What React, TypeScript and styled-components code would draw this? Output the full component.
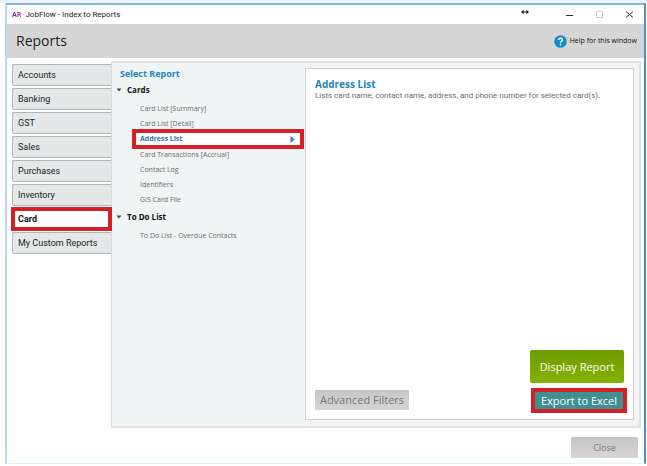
import React, { useState } from "react";
import styled, { createGlobalStyle, css } from "styled-components";

const GlobalStyle = createGlobalStyle`
  * { box-sizing: border-box; }
  body { margin: 0; background: #fff; font-family: "Open Sans", "Noto Sans", sans-serif; color: #333; }
  button { font-family: inherit; margin: 0; padding: 0; cursor: pointer; }
`;

const compactFont = `Roboto, "Noto Sans", sans-serif`;

const Desktop = styled.div`
  min-height: 100vh;
  display: flex;
  padding: 3px 1px 2px 5px;
  background: linear-gradient(#edf3fc 3px, #fff 3px);
`;

const Window = styled.div`
  flex: 1;
  display: flex;
  flex-direction: column;
  border-style: solid;
  border-width: 2px 2px 1px 2px;
  border-color: #7dbbd6 #4692c0 #dff3fa #b9d8e6;
  background: #fff;
`;

const TitleBar = styled.header`
  height: 19px;
  display: flex;
  align-items: center;
  padding: 0 10px 0 5px;
  gap: 4px;
`;

const WindowTitle = styled.span`
  flex: 1;
  font-family: ${compactFont};
  font-size: 8px;
  line-height: 10px;
  color: #222;
`;

const Logo = styled.span`
  font-size: 7px;
  line-height: 10px;
  font-weight: 700;
  background: linear-gradient(90deg, #4a35c8, #d92bb1);
  background-clip: text;
  color: transparent;
`;

const ResizeMark = styled.svg`
  width: 8px;
  height: 6px;
  margin: 0 32px 6px 0;
`;

const WindowControls = styled.div`
  display: flex;
  gap: 21px;
`;

const ControlButton = styled.button<{ $dim?: boolean }>`
  width: 9px;
  height: 9px;
  border: 0;
  background: none;
  color: ${(p) => (p.$dim ? "#cfcfcf" : "#333")};
  svg { display: block; width: 9px; height: 9px; }
`;

const PageHeader = styled.div`
  height: 34px;
  display: flex;
  align-items: center;
  justify-content: space-between;
  padding: 0 7px 0 9px;
  background: #d6d6d6;
`;

const PageTitle = styled.h1`
  margin: 0;
  font-size: 14px;
  line-height: 18px;
  font-weight: 400;
  color: #1d1d1d;
`;

const HelpLink = styled.a`
  display: flex;
  align-items: center;
  gap: 3px;
  font-size: 7px;
  line-height: 10px;
  color: #111;
  text-decoration: none;
`;

const HelpIcon = styled.svg`
  width: 13px;
  height: 13px;
`;

const Main = styled.main`
  flex: 1;
  display: flex;
  padding: 3px 3px 0 5px;
`;

const TabList = styled.nav`
  width: 99px;
  display: flex;
  flex-direction: column;
  gap: 2px;
  padding-top: 3px;
`;

const marked = css`
  outline: 4px solid #d42027;
  border-radius: 0;
`;

const Tab = styled.button<{ $active: boolean }>`
  height: 22px;
  padding-left: 5px;
  border: 1px solid #b4b6b6;
  border-right: 0;
  border-radius: 2px 0 0 2px;
  background: #e5e8e8;
  font-family: ${compactFont};
  font-size: 9px;
  line-height: 12px;
  text-align: left;
  color: #222;
  ${(p) =>
    p.$active &&
    css`
      ${marked}
      outline-offset: -3px;
      position: relative;
      border-color: #fff;
      background: #fff;
      font-weight: 700;
      color: #111;
    `}
`;

const Panel = styled.section`
  flex: 1;
  display: flex;
  padding: 5px 5px 6px 0;
  border: 2px solid #e1e1e1;
  border-left: 1px solid #d8d8d8;
  background: #f3f4f4;
`;

const ReportTree = styled.div`
  width: 193px;
  margin: -5px 0 -6px;
  padding: 5px 5px 0 8px;
  background: #eff4f4;
`;

const SectionTitle = styled.h2<{ $large?: boolean }>`
  margin: 0;
  font-size: ${(p) => (p.$large ? 10 : 9)}px;
  line-height: ${(p) => (p.$large ? 14 : 12)}px;
  font-weight: 700;
  color: #2484bb;
`;

const GroupToggle = styled.button`
  display: flex;
  align-items: center;
  gap: 5px;
  height: 12px;
  margin: 4px 0 4px -4px;
  border: 0;
  background: none;
  font-size: 8px;
  line-height: 12px;
  font-weight: 700;
  color: #111;
  svg { width: 6px; height: 4px; }
`;

const ReportList = styled.div`
  display: flex;
  flex-direction: column;
  padding: 1px 0 0 16px;
`;

const ReportItem = styled.button<{ $active: boolean }>`
  height: 15px;
  display: flex;
  align-items: center;
  justify-content: space-between;
  padding: 0 5px 0 4px;
  border: 0;
  background: none;
  font-size: 7px;
  line-height: 10px;
  text-align: left;
  color: #6c6c6c;
  svg { width: 5px; height: 7px; }
  ${(p) =>
    p.$active &&
    css`
      ${marked}
      height: 12px;
      margin: 2px 0;
      position: relative;
      background: #fff;
      font-weight: 700;
      color: #2f78b0;
    `}
`;

const Details = styled.article`
  flex: 1;
  display: flex;
  flex-direction: column;
  border: 1px solid #cfcfcf;
  background: #fff;
  padding: 8px 9px 9px;
`;

const Description = styled.p`
  margin: 0;
  font-family: ${compactFont};
  font-size: 8px;
  line-height: 10px;
  color: #6c6c6c;
`;

const Actions = styled.div`
  margin-top: auto;
  display: flex;
  justify-content: space-between;
  align-items: flex-end;
`;

const PrimaryActions = styled.div`
  width: 94px;
  display: flex;
  flex-direction: column;
  gap: 9px;
`;

const ActionButton = styled.button<{ $kind: "grey" | "green" | "teal" }>`
  height: 20px;
  border: 0;
  border-radius: 1px;
  font-size: 11px;
  line-height: 14px;
  color: #777;
  background: linear-gradient(#c6c6c6, #d6d6d6);
  ${(p) =>
    p.$kind === "green" &&
    css`
      height: 33px;
      border-radius: 2px;
      background: linear-gradient(#6f9c00, #83b100);
      color: #fff;
    `}
  ${(p) =>
    p.$kind === "teal" &&
    css`
      ${marked}
      height: 17px;
      margin: 0 1px 1px 5px;
      background: #3f8f93;
      color: #fff;
    `}
`;

const FilterButton = styled(ActionButton)`
  width: 94px;
`;

const Footer = styled.footer`
  display: flex;
  justify-content: flex-end;
  padding: 9px 6px 5px;
`;

const CloseButton = styled(ActionButton)`
  width: 67px;
  height: 21px;
  font-size: 9px;
`;

const tabs = ["Accounts", "Banking", "GST", "Sales", "Purchases", "Inventory", "Card", "My Custom Reports"];

const groups = [
  {
    name: "Cards",
    reports: [
      "Card List [Summary]",
      "Card List [Detail]",
      "Address List",
      "Card Transactions [Accrual]",
      "Contact Log",
      "Identifiers",
      "GIS Card File",
    ],
  },
  { name: "To Do List", reports: ["To Do List - Overdue Contacts"] },
];

export default function App() {
  const [tab, setTab] = useState("Card");
  const [report, setReport] = useState("Address List");

  return (
    <>
      <GlobalStyle />
      <Desktop>
        <Window>
          <TitleBar>
            <Logo>AR</Logo>
            <WindowTitle>JobFlow - Index to Reports</WindowTitle>
            <ResizeMark viewBox="0 0 9 6" aria-hidden="true">
              <path d="M0 3 3 0.5V2.3H6V0.5L9 3 6 5.5V3.7H3V5.5Z" fill="#222" />
            </ResizeMark>
            <WindowControls>
              <ControlButton aria-label="Minimize">
                <svg viewBox="0 0 9 9"><path d="M1 5.5H8" stroke="currentColor" /></svg>
              </ControlButton>
              <ControlButton aria-label="Maximize" $dim>
                <svg viewBox="0 0 9 9"><path d="M1.5 1.5H7.5V7.5H1.5Z" fill="none" stroke="currentColor" /></svg>
              </ControlButton>
              <ControlButton aria-label="Close window">
                <svg viewBox="0 0 9 9"><path d="M1 1.5 8 7.5M8 1.5 1 7.5" stroke="currentColor" /></svg>
              </ControlButton>
            </WindowControls>
          </TitleBar>
          <PageHeader>
            <PageTitle>Reports</PageTitle>
            <HelpLink href="#help">
              <HelpIcon viewBox="0 0 13 13" aria-hidden="true">
                <circle cx="6.5" cy="6.5" r="6.3" fill="#178bc9" />
                <path d="M4.6 5.1C4.6 2.6 8.5 2.7 8.4 5 8.3 6.3 6.6 6.3 6.5 7.8" fill="none" stroke="#fff" strokeWidth="1.4" />
                <circle cx="6.5" cy="9.6" r="0.8" fill="#fff" />
              </HelpIcon>
              Help for this window
            </HelpLink>
          </PageHeader>
          <Main>
            <TabList>
              {tabs.map((name) => (
                <Tab key={name} $active={name === tab} onClick={() => setTab(name)}>
                  {name}
                </Tab>
              ))}
            </TabList>
            <Panel>
              <ReportTree>
                <SectionTitle>Select Report</SectionTitle>
                {groups.map((group) => (
                  <React.Fragment key={group.name}>
                    <GroupToggle>
                      <svg viewBox="0 0 6 4" aria-hidden="true"><path d="M0.5 0.5H5.5L3 3.5Z" fill="#444" /></svg>
                      {group.name}
                    </GroupToggle>
                    <ReportList>
                      {group.reports.map((name) => (
                        <ReportItem key={name} $active={name === report} onClick={() => setReport(name)}>
                          {name}
                          {name === report && (
                            <svg viewBox="0 0 5 7" aria-hidden="true"><path d="M0.5 0 4.8 3.5 0.5 7Z" fill="#3f78d0" /></svg>
                          )}
                        </ReportItem>
                      ))}
                    </ReportList>
                  </React.Fragment>
                ))}
              </ReportTree>
              <Details>
                <SectionTitle $large>Address List</SectionTitle>
                <Description>
                  Lists card name, contact name, address, and phone number for selected card(s).
                </Description>
                <Actions>
                  <FilterButton $kind="grey">Advanced Filters</FilterButton>
                  <PrimaryActions>
                    <ActionButton $kind="green">Display Report</ActionButton>
                    <ActionButton $kind="teal">Export to Excel</ActionButton>
                  </PrimaryActions>
                </Actions>
              </Details>
            </Panel>
          </Main>
          <Footer>
            <CloseButton $kind="grey">Close</CloseButton>
          </Footer>
        </Window>
      </Desktop>
    </>
  );
}
